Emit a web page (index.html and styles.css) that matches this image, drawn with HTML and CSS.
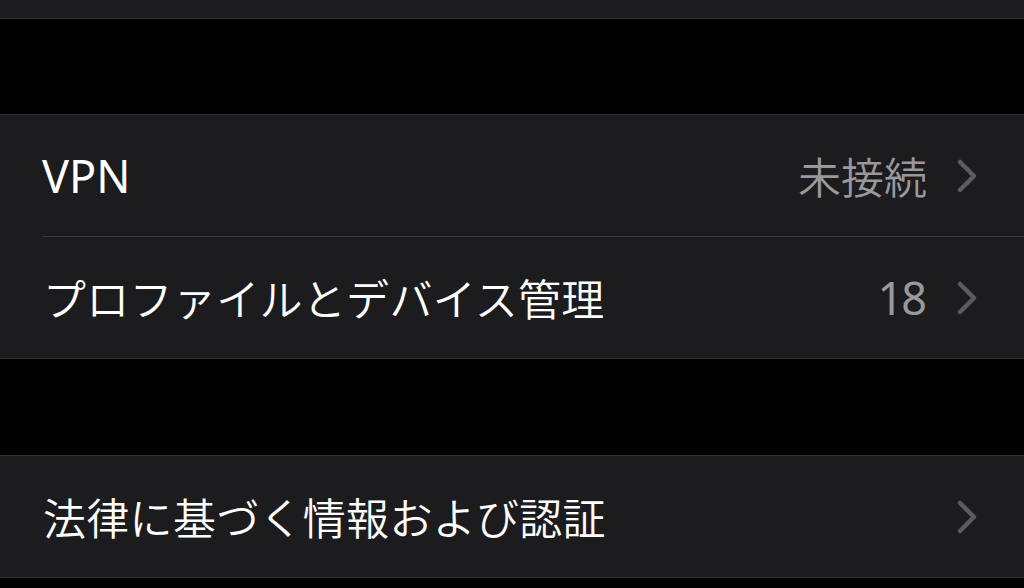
FILE: index.html
```html
<!DOCTYPE html>
<html>
	<head>
		<meta charset="UTF-8">
		<title>設定</title>
		<link rel="stylesheet" href="styles.css">
	</head>
	<body>
		<div class="group top"></div>
		<div class="gap"></div>
		<ul class="group">
			<li class="row">
				<div class="inner">
					<span class="label latin">VPN</span>
					<span class="value">未接続</span>
					<svg class="chev" viewBox="0 0 20 34"><path d="M3 3 L17 17 L3 31"/></svg>
				</div>
			</li>
			<li class="row">
				<div class="inner last">
					<span class="label">プロファイルとデバイス管理</span>
					<span class="value latin">18</span>
					<svg class="chev" viewBox="0 0 20 34"><path d="M3 3 L17 17 L3 31"/></svg>
				</div>
			</li>
		</ul>
		<div class="gap wide"></div>
		<ul class="group">
			<li class="row">
				<div class="inner last">
					<span class="label">法律に基づく情報および認証</span>
					<svg class="chev" viewBox="0 0 20 34"><path d="M3 3 L17 17 L3 31"/></svg>
				</div>
			</li>
		</ul>
	</body>
</html>
```

FILE: styles.css
```css
*{
	margin: 0;
	padding: 0;
}
html,body{
	background: #000;
	height: 100%;
	overflow: hidden;
}
body{
	font-family: "Noto Sans", "Noto Sans CJK JP", sans-serif;
	color: #fff;
}
li{
	list-style: none;
}
.group{
	background: #1c1c1e;
	border-top: 1px solid #303033;
	border-bottom: 1px solid #303033;
}
.group.top{
	height: 18px;
	border-top: none;
}
.gap{
	height: 95px;
}
.gap.wide{
	height: 96px;
}
.row{
	padding-left: 42px;
}
.inner{
	height: 121px;
	display: flex;
	align-items: center;
	padding-right: 47px;
	border-bottom: 1px solid #38383a;
}
.inner.last{
	border-bottom: none;
}
.label{
	flex: 1;
	font-size: 43px;
	font-weight: 350;
	letter-spacing: 0.3px;
	padding-left: 1px;
}
.value{
	font-size: 43px;
	font-weight: 350;
	color: #98989d;
	margin-right: 30px;
}
.latin{
	font-size: 45px;
	font-weight: 400;
	letter-spacing: 0;
	padding-left: 0;
}
.value.latin{
	letter-spacing: -2px;
	margin-right: 32px;
}
.chev{
	width: 20px;
	height: 34px;
	fill: none;
	stroke: #5b5b5f;
	stroke-width: 4.5;
	stroke-linecap: round;
	stroke-linejoin: round;
}
```
